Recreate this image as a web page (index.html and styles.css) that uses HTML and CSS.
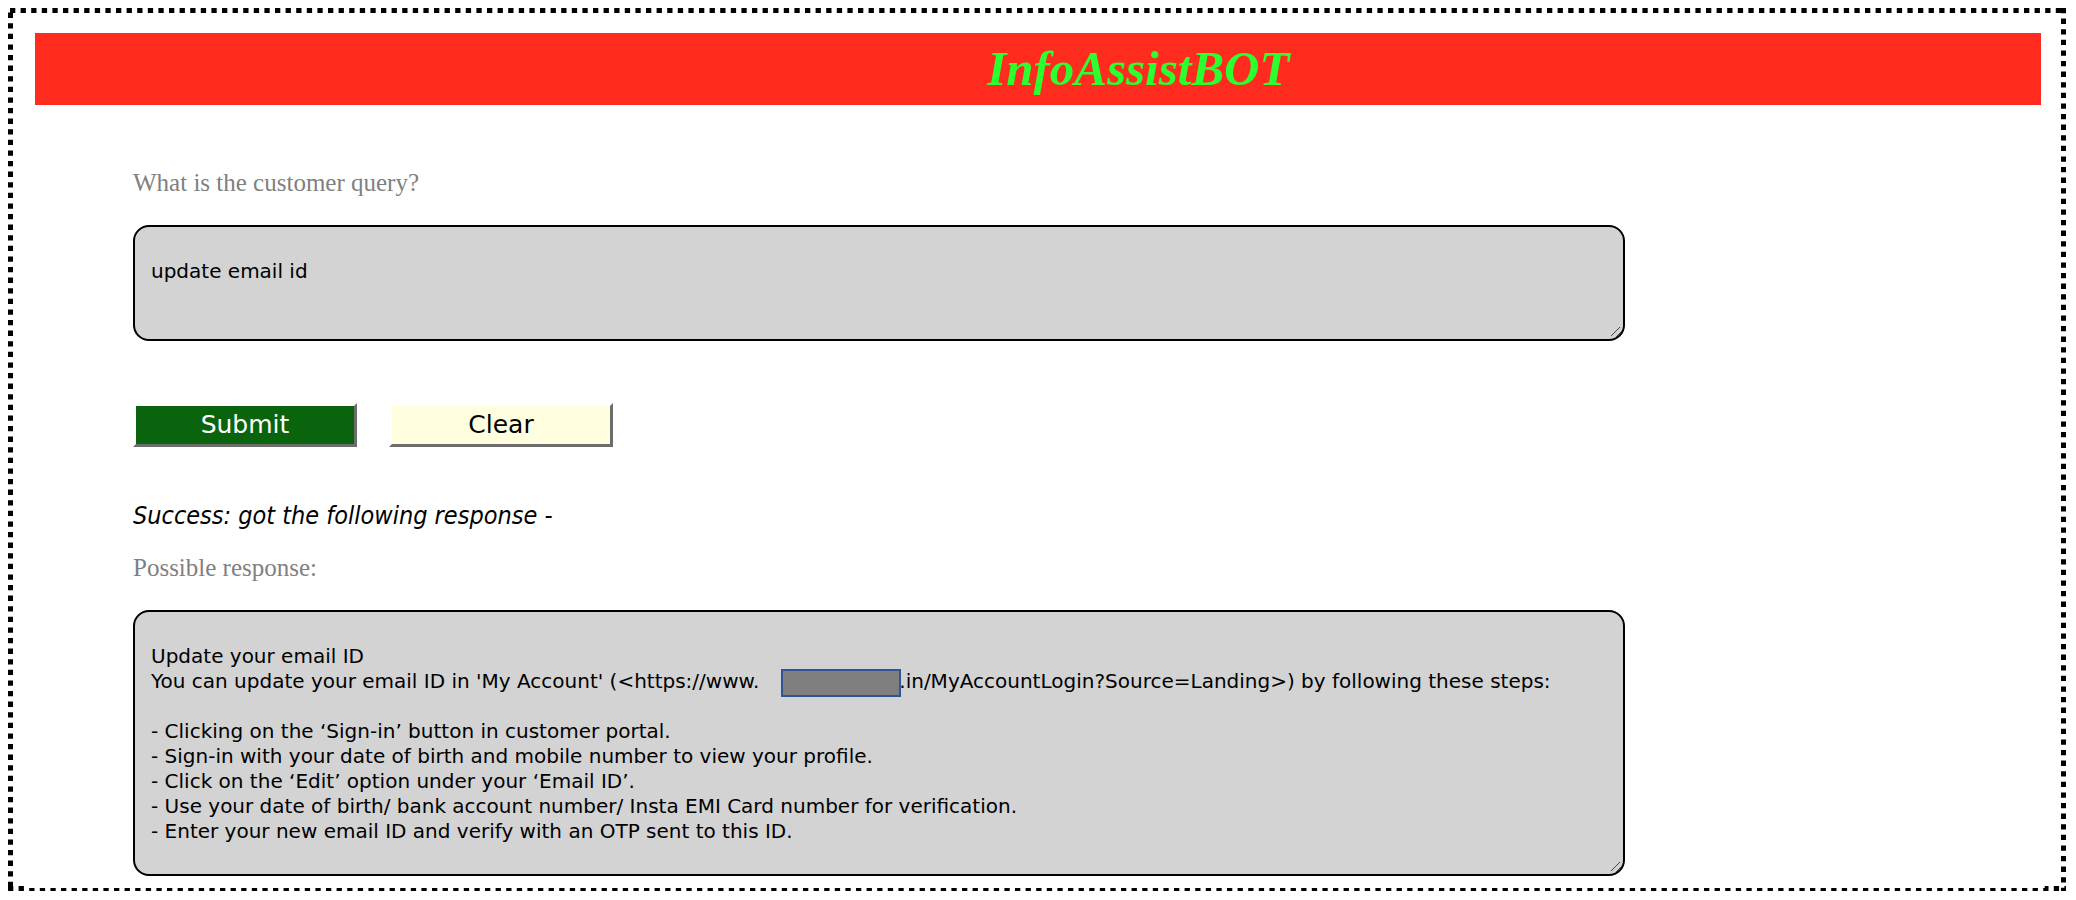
FILE: index.html
```html
<!DOCTYPE html>
<html lang="en">
<head>
<meta charset="utf-8">
<title>InfoAssistBOT</title>
<link rel="stylesheet" href="styles.css">
</head>
<body>
<div class="frame">
  <svg class="frame-border" aria-hidden="true">
    <g stroke="#000" stroke-width="5" stroke-dasharray="5.3 5.3">
      <line x1="2" y1="2.5" x2="100%" y2="2.5"/>
      <line x1="2.5" y1="4.6" x2="2.5" y2="100%"/>
      <line x1="0" y1="100%" x2="100%" y2="100%" transform="translate(0 -2.5)"/>
      <line x1="100%" y1="0" x2="100%" y2="100%" transform="translate(-2.5 0)"/>
    </g>
    <svg x="20" y="0" width="98%" height="100%"><line x1="0" y1="100%" x2="100%" y2="100%" stroke="#fff" stroke-width="4" transform="translate(0 -5)"/></svg>
  </svg>
  <header class="banner"><h1 class="banner-title">InfoAssistBOT</h1></header>
  <form class="assist-form">
    <label class="field-label" for="query">What is the customer query?</label>
    <div class="field">
      <textarea class="field-text" id="query" rows="2">update email id</textarea>
      <svg class="grip" width="12" height="12" aria-hidden="true"><path d="M1 10L10 1M6 11L11 6" stroke="#444" fill="none"/></svg>
    </div>
    <div class="actions">
      <button class="button button-submit" type="button">Submit</button>
      <button class="button button-clear" type="button">Clear</button>
    </div>
    <p class="status">Success: got the following response -</p>
    <label class="field-label" for="response">Possible response:</label>
    <div class="field">
      <textarea class="field-text" id="response" rows="8">Update your email ID
You can update your email ID in 'My Account' (&lt;https://www.&nbsp;&nbsp;&nbsp;&nbsp;&nbsp;&nbsp;&nbsp;&nbsp;&nbsp;&nbsp;&nbsp;&nbsp;&nbsp;&nbsp;&nbsp;&nbsp;&nbsp;&nbsp;&nbsp;&nbsp;&nbsp;&nbsp;.in/MyAccountLogin?Source=Landing&gt;) by following these steps:

- Clicking on the ‘Sign-in’ button in customer portal.
- Sign-in with your date of birth and mobile number to view your profile.
- Click on the ‘Edit’ option under your ‘Email ID’.
- Use your date of birth/ bank account number/ Insta EMI Card number for verification.
- Enter your new email ID and verify with an OTP sent to this ID.</textarea>
      <span class="redaction"></span>
      <svg class="grip" width="12" height="12" aria-hidden="true"><path d="M1 10L10 1M6 11L11 6" stroke="#444" fill="none"/></svg>
    </div>
  </form>
</div>
</body>
</html>
```
FILE: styles.css
```css
* { box-sizing: border-box; }
body { margin: 8px 10px 9px 8px; background: #fff; }
.frame { position: relative; padding: 25px 25px 15px 27px; }
.frame-border { position: absolute; inset: 0; width: 100%; height: 100%; pointer-events: none; }
.banner { background: #ff2b1f; padding-left: 10%; }
.banner-title {
  margin: 0;
  font: italic bold 49px/72px "Apple Chancery", "Liberation Serif", serif;
  color: #2bff2f;
  text-align: center;
}
.assist-form { width: 74.4%; margin: 64px 0 0 98px; }
.field-label { display: block; margin-bottom: 28px; font: 25px/28px "Liberation Serif", serif; color: #808080; }
.field { position: relative; }
.field-text {
  display: block;
  width: 100%;
  padding: 32px 16px 30px;
  border: 2px solid #000;
  border-radius: 16px;
  background: #d3d3d3;
  color: #000;
  font: 20px/25px "DejaVu Sans", sans-serif;
  resize: none;
  overflow: hidden;
}
.grip { position: absolute; right: 3px; bottom: 3px; }
.redaction {
  position: absolute;
  left: 648px;
  top: 59px;
  width: 120px;
  height: 28px;
  border: 2px solid #2f5597;
  background: #7f7f7f;
}
.actions { display: flex; gap: 32px; margin-top: 62px; }
.button {
  width: 224px;
  height: 44px;
  padding: 0;
  border: 3px solid;
  border-color: #fff #6d6d6d #6d6d6d #fff;
  font: 25px/36px "DejaVu Sans", sans-serif;
}
.button-submit { background: #0a640d; color: #fff; }
.button-clear { background: #ffffe0; color: #000; }
.status { margin: 54px 0 23px; font: italic 25px/30px "DejaVu Sans Condensed", "DejaVu Sans", sans-serif; color: #000; }
```
